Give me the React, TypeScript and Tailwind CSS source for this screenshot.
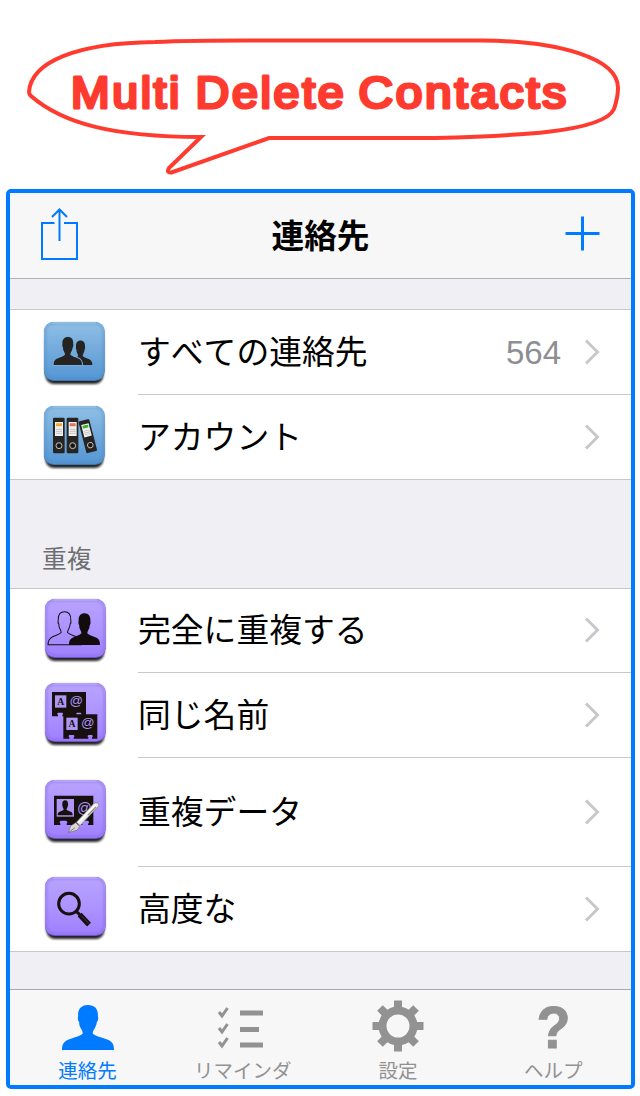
import { useId, type ReactNode } from 'react'

const PERSON =
  'M0 100C0 87 3 82 13 77C24 72 35 70 40 64C40 58 36 54 34 48C33 45 33 42 33 39C30 36 30 30 31 26C30 10 38 2 50 2C63 2 70 11 69 26C70 30 70 36 67 39C67 42 66 45 65 48C63 54 59 58 59 64C64 70 76 72 87 77C97 82 100 87 100 100Z'

function Tile({
  color,
  children,
}: {
  color: 'blue' | 'purple'
  children: ReactNode
}) {
  const id = useId()
  const blue = color === 'blue'
  return (
    <svg
      viewBox="-6 -3 198 201"
      className={`h-[67px] w-[66px] shrink-0 ${
        blue ? 'mt-[3px]' : 'mr-[-1px] ml-px'
      }`}
      aria-hidden="true">
      <defs>
        <linearGradient id={`${id}face`} x1="0" y1="0" x2="0" y2="1">
          <stop offset="0" stopColor={blue ? '#8fbfe6' : '#b8a3ff'} />
          <stop offset="0.5" stopColor={blue ? '#72aadb' : '#ad94ff'} />
          <stop offset="1" stopColor={blue ? '#5596d5' : '#a07fff'} />
        </linearGradient>
        <filter id={`${id}soft`} x="-10%" y="-10%" width="120%" height="120%">
          <feGaussianBlur stdDeviation="3" />
        </filter>
      </defs>
      <rect
        x="4"
        y="24"
        width="174"
        height="162"
        rx="26"
        fill="#111"
        opacity="0.9"
        filter={`url(#${id}soft)`}
      />
      <rect
        width="182"
        height="177"
        rx="29"
        fill={blue ? '#3e75ab' : '#6a4fc4'}
      />
      <rect width="182" height="174" rx="29" fill={`url(#${id}face)`} />
      <rect
        x="4"
        y="4"
        width="174"
        height="166"
        rx="25"
        fill="none"
        stroke={blue ? '#4c84ba' : '#7a5fcf'}
        strokeWidth="5"
        opacity="0.5"
        filter={`url(#${id}soft)`}
      />
      <path
        d="M27 3H155"
        stroke="#fff"
        strokeWidth="3"
        opacity="0.3"
        strokeLinecap="round"
      />
      {children}
    </svg>
  )
}

function PeopleIcon() {
  return (
    <Tile color="blue">
      <path
        d={PERSON}
        transform="translate(74 54) scale(.71 .75)"
        fill="#252423"
      />
      <path
        d={PERSON}
        transform="translate(29 43) scale(.85 .86)"
        fill="#252423"
        stroke="#78afde"
        strokeWidth="7"
      />
      <path
        d={PERSON}
        transform="translate(29 43) scale(.85 .86)"
        fill="#252423"
      />
    </Tile>
  )
}

function Binder({ transform, label }: { transform: string; label: string }) {
  return (
    <g transform={transform}>
      <rect width="35" height="107" rx="4" fill="#262524" />
      <rect x="6" y="13" width="24" height="42" fill="#f1f1f1" />
      <rect x="9" y="17" width="18" height="9" rx="2" fill={label} />
      <path d="M9 35H27M9 41H27M9 47H27" stroke="#c3c3c3" strokeWidth="3" />
      <circle
        cx="18"
        cy="84"
        r="9"
        fill="none"
        stroke="#d8d8d8"
        strokeWidth="2.5"
      />
      <circle cx="18" cy="84" r="4" fill="#111" />
    </g>
  )
}

function BindersIcon() {
  return (
    <Tile color="blue">
      <Binder transform="translate(27 35)" label="#f0ad2b" />
      <Binder transform="translate(68 35)" label="#e8715a" />
      <Binder
        transform="translate(103 47) rotate(-14.5) scale(.95 .92)"
        label="#2fb91d"
      />
    </Tile>
  )
}

function DuplicateIcon() {
  return (
    <Tile color="purple">
      <path
        d={PERSON}
        transform="translate(9 36) scale(.99 1.01)"
        fill="none"
        stroke="#15100f"
        strokeWidth="3"
      />
      <path
        d={PERSON}
        transform="translate(72 41) scale(.93 .97)"
        fill="#120d0c"
      />
    </Tile>
  )
}

function NameCard({ transform }: { transform: string }) {
  return (
    <g transform={transform}>
      <path
        d="M0 0H102V73H86V69A4 4 0 0 0 86 62H75A4 4 0 0 0 75 69V73H31V69A4 4 0 0 0 31 62H18A4 4 0 0 0 18 69V73H0Z"
        fill="#17100f"
      />
      <rect x="9" y="10" width="34" height="37" fill="#ad97f3" />
      <text
        x="26"
        y="38"
        textAnchor="middle"
        className="font-['Liberation_Serif'] text-[29px] font-bold"
        fill="#17100f">
        A
      </text>
      <text
        x="73"
        y="39"
        textAnchor="middle"
        className="font-['Liberation_Sans'] text-[40px]"
        fill="#ad97f3">
        @
      </text>
    </g>
  )
}

function SameNameIcon() {
  return (
    <Tile color="purple">
      <NameCard transform="translate(21 27)" />
      <NameCard transform="translate(55 94)" />
    </Tile>
  )
}

function DataIcon() {
  return (
    <Tile color="purple">
      <path
        d="M27 47H145V135H129V131A5 5 0 0 0 129 122H112A5 5 0 0 0 112 131V135H65V131A5 5 0 0 0 62 122H49A5 5 0 0 0 46 131V135H27Z"
        fill="#17100f"
      />
      <rect x="35" y="57" width="52" height="53" fill="#ad97f3" />
      <path
        d={PERSON}
        transform="translate(38 60) scale(.45 .46)"
        fill="#17100f"
      />
      <text
        x="118"
        y="98"
        textAnchor="middle"
        className="font-['Liberation_Sans'] text-[44px]"
        fill="#ad97f3">
        @
      </text>
      <path
        d="M147 70Q160 64 162 77L105 137L94 127Z"
        fill="#e9e8e6"
        stroke="#77736f"
        strokeWidth="2"
      />
      <path d="M152 74L101 127" stroke="#fff" strokeWidth="4" />
      <path d="M153 81L129 105" stroke="#94908c" strokeWidth="4" />
      <path
        d="M92 128L104 139L97 150L70 158L77 138Z"
        fill="#dad9d7"
        stroke="#77736f"
        strokeWidth="2"
      />
      <path d="M71 157L90 143" stroke="#555" strokeWidth="2" />
    </Tile>
  )
}

function SearchIcon() {
  return (
    <Tile color="purple">
      <circle
        cx="72"
        cy="80"
        r="31"
        fill="none"
        stroke="#17100f"
        strokeWidth="9"
      />
      <path d="M94 103L108 117" stroke="#17100f" strokeWidth="9" />
      <path d="M104 113L132 143" stroke="#17100f" strokeWidth="16" />
      <path d="M109 116L131 139" stroke="#5d4b72" strokeWidth="2" />
    </Tile>
  )
}

function Row({
  icon,
  label,
  count,
  height,
  last,
}: {
  icon: ReactNode
  label: string
  count?: number
  height: string
  last?: boolean
}) {
  return (
    <li className={`flex ${height} items-center bg-white pl-8`}>
      {icon}
      <div
        className={`ml-[30px] flex h-full flex-1 items-center pr-[31px] ${
          last ? '' : 'border-b border-[#c8c7cc]'
        }`}>
        <span className="flex-1 pb-[4px] text-[32.8px] leading-none text-black [font-kerning:none]">
          {label}
        </span>
        {count && (
          <span className="mr-[23px] font-['Liberation_Sans'] text-[33px] leading-none text-[#8e8e93]">
            {count}
          </span>
        )}
        <svg
          viewBox="0 0 16 26"
          className="mb-px h-[26px] w-4"
          fill="none"
          stroke="#c7c7cc"
          strokeWidth="3">
          <path d="M2 1.5L13.5 13L2 24.5" />
        </svg>
      </div>
    </li>
  )
}

function Bubble() {
  return (
    <svg
      viewBox="0 0 640 189"
      className="h-[189px] w-full shrink-0"
      fill="none"
      stroke="#ff3b30">
      <path
        d="M29 92C31 62 76 43 155 42Q190 40.5 245 40.5H482C558 41 618 58 618 88Q618 97 614 109C603 133 510 136 435 138H269L171.500 172.500Q166 173 169 168L201 137C112 137 62 123 31 96Q29 94 29 92Z"
        strokeWidth="4"
      />
      <g
        fill="#ff3b30"
        strokeWidth="3.2"
        strokeLinejoin="round"
        strokeLinecap="round"
        className="font-['Liberation_Sans'] text-[44px]">
        <text
          x="71"
          y="107.500"
          textLength="111"
          lengthAdjust="spacingAndGlyphs"
          className="tracking-[2.5px]">
          Multi
        </text>
        <text
          x="195.500"
          y="107.500"
          textLength="151"
          lengthAdjust="spacingAndGlyphs"
          className="tracking-[2.5px]">
          Delete
        </text>
        <text
          x="358.500"
          y="107.500"
          textLength="210.500"
          lengthAdjust="spacingAndGlyphs"
          className="tracking-[2.5px]">
          Contacts
        </text>
      </g>
    </svg>
  )
}

function Tab({
  label,
  active,
  children,
}: {
  label: string
  active?: boolean
  children: ReactNode
}) {
  return (
    <div
      className={`flex flex-1 flex-col items-center pt-2 ${
        active ? 'text-[#007aff]' : 'text-[#929292]'
      }`}>
      <svg
        viewBox="0 0 60 56"
        className="h-14 w-[60px] shrink-0 overflow-visible"
        fill="currentColor">
        {children}
      </svg>
      <span className="mt-[6px] text-[19.5px] leading-5">{label}</span>
    </div>
  )
}

export default function App() {
  return (
    <main className="flex h-[1096px] w-[640px] flex-col overflow-hidden bg-white font-['Noto_Sans_CJK_JP',sans-serif]">
      <Bubble />
      <div className="ml-[6px] flex h-[900px] w-[629px] shrink-0 flex-col overflow-hidden rounded-[5px] border-4 border-[#007aff] bg-[#efeff4]">
        <header className="grid h-[86px] shrink-0 grid-cols-3 items-center border-b border-[#b2b2b2] bg-[#f7f7f7] px-[30px]">
          <svg
            viewBox="0 0 40 54"
            className="mb-[3px] h-[54px] w-10"
            fill="none"
            stroke="#007aff"
            strokeWidth="2">
            <path d="M14.500 16H2V52H37V16H24" />
            <path d="M19.500 34V3M12 10L19.500 2.500L27 10" />
          </svg>
          <h1 className="pb-[3px] text-center text-[32.7px] leading-none font-bold text-black">
            連絡先
          </h1>
          <svg
            viewBox="0 0 36 36"
            className="mb-1 h-9 w-9 justify-self-end"
            fill="none"
            stroke="#007aff"
            strokeWidth="3">
            <path d="M0.500 17.500H34.500M17.500 0.500V34.500" />
          </svg>
        </header>
        <ul className="mt-[30px] border-y border-[#c8c7cc]">
          <Row
            icon={<PeopleIcon />}
            label="すべての連絡先"
            count={564}
            height="h-[85px]"
          />
          <Row
            icon={<BindersIcon />}
            label="アカウント"
            height="h-[84px]"
            last
          />
        </ul>
        <h2 className="flex h-[108px] items-end px-8 pb-[17px] text-[24.7px] leading-[27px] text-[#6d6d72]">
          重複
        </h2>
        <ul className="border-y border-[#c8c7cc]">
          <Row
            icon={<DuplicateIcon />}
            label="完全に重複する"
            height="h-[84px]"
          />
          <Row icon={<SameNameIcon />} label="同じ名前" height="h-[85px]" />
          <Row icon={<DataIcon />} label="重複データ" height="h-[109px]" />
          <Row icon={<SearchIcon />} label="高度な" height="h-[84px]" last />
        </ul>
        <nav className="mt-auto flex h-24 shrink-0 border-t border-[#a9a9ad] bg-[#f7f7f7]">
          <Tab label="連絡先" active>
            <path d={PERSON} transform="translate(4 6) scale(.52 .46)" />
          </Tab>
          <Tab label="リマインダ">
            <path d="M27 12.500h23v5H27zM27 29h19v5H27zM27 44.500h23v5H27z" />
            <path
              d="M6 14L9 18L14.500 10M6 30L9 34L14.500 26M6 44L9 48L14.500 40"
              fill="none"
              stroke="currentColor"
              strokeWidth="3"
            />
          </Tab>
          <Tab label="設定">
            <circle
              cx="30"
              cy="28"
              r="15.5"
              fill="none"
              stroke="currentColor"
              strokeWidth="8"
            />
            {[0, 45, 90, 135, 180, 225, 270, 315].map((angle) => (
              <rect
                key={angle}
                x="26"
                y="2.500"
                width="8"
                height="9"
                transform={`rotate(${angle} 30 28)`}
              />
            ))}
          </Tab>
          <Tab label="ヘルプ">
            <text
              x="30.500"
              y="49.500"
              textAnchor="middle"
              stroke="currentColor"
              className="font-['Liberation_Sans'] text-[60px] font-bold"
              textLength="34"
              lengthAdjust="spacingAndGlyphs">
              ?
            </text>
          </Tab>
        </nav>
      </div>
    </main>
  )
}
